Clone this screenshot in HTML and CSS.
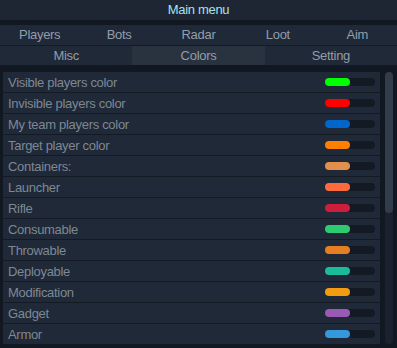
FILE: index.html
```html
<!DOCTYPE html>
<html>
<head>
  <title>Main menu</title>
  <link rel="stylesheet" href="styles.css">
</head>
<body>
  <div class="title">Main menu</div>
  <div class="tabs tabs5">
    <div class="tab">Players</div>
    <div class="tab">Bots</div>
    <div class="tab">Radar</div>
    <div class="tab">Loot</div>
    <div class="tab">Aim</div>
  </div>
  <div class="tabs tabs3">
    <div class="tab">Misc</div>
    <div class="tab active">Colors</div>
    <div class="tab">Setting</div>
  </div>
  <div class="body">
    <div class="list">
      <div class="row"><span>Visible players color</span><i class="bar"><b style="background:#00ff00"></b></i></div>
      <div class="row"><span>Invisible players color</span><i class="bar"><b style="background:#ff0000"></b></i></div>
      <div class="row"><span>My team players color</span><i class="bar"><b style="background:#0066cc"></b></i></div>
      <div class="row"><span>Target player color</span><i class="bar"><b style="background:#ff8000"></b></i></div>
      <div class="row"><span>Containers:</span><i class="bar"><b style="background:#e0904c"></b></i></div>
      <div class="row"><span>Launcher</span><i class="bar"><b style="background:#ff6a3c"></b></i></div>
      <div class="row"><span>Rifle</span><i class="bar"><b style="background:#cc1f3c"></b></i></div>
      <div class="row"><span>Consumable</span><i class="bar"><b style="background:#2ecc71"></b></i></div>
      <div class="row"><span>Throwable</span><i class="bar"><b style="background:#e67e22"></b></i></div>
      <div class="row"><span>Deployable</span><i class="bar"><b style="background:#1abc9c"></b></i></div>
      <div class="row"><span>Modification</span><i class="bar"><b style="background:#f39c12"></b></i></div>
      <div class="row"><span>Gadget</span><i class="bar"><b style="background:#9b59b6"></b></i></div>
      <div class="row"><span>Armor</span><i class="bar"><b style="background:#3498db"></b></i></div>
    </div>
    <div class="scroll"><div class="thumb"></div></div>
  </div>
</body>
</html>
```

FILE: styles.css
```css
body {
  margin: 0;
  background-color: #121821;
  font-family: "Liberation Sans", Arial, sans-serif;
  font-size: 13px;
  letter-spacing: -0.3px;
  color: #7d8895;
}

.title {
  height: 20px;
  line-height: 20px;
  text-align: center;
  background-color: #1e2633;
  color: #a6e2ea;
  margin-bottom: 5px;
}

.tabs {
  display: grid;
  background-color: #202937;
  color: #929dab;
}

.tabs5 {
  grid-template-columns: repeat(5, 1fr);
  height: 20px;
  line-height: 20px;
  border-bottom: 1px solid #151b25;
}

.tabs3 {
  grid-template-columns: repeat(3, 1fr);
  height: 19px;
  line-height: 19px;
  margin-bottom: 7px;
}

.tab {
  text-align: center;
}

.tab.active {
  background-color: #29323f;
}

.body {
  display: flex;
  padding-left: 3px;
}

.list {
  width: 377px;
}

.row {
  display: flex;
  align-items: center;
  justify-content: space-between;
  height: 20px;
  padding: 0 5px 0 5px;
  background-color: #202937;
  border-bottom: 1px solid #141a23;
}

.row span {
  padding-top: 1px;
}

.bar {
  display: block;
  width: 50px;
  height: 8px;
  border-radius: 4px;
  background-color: #141a23;
}

.bar b {
  display: block;
  width: 25px;
  height: 8px;
  border-radius: 4px;
}

.scroll {
  width: 8px;
  height: 272px;
  margin-left: 5px;
  border-radius: 4px;
  background-color: #1a2230;
}

.thumb {
  height: 141px;
  border-radius: 4px;
  background-color: #323c4b;
}
```
